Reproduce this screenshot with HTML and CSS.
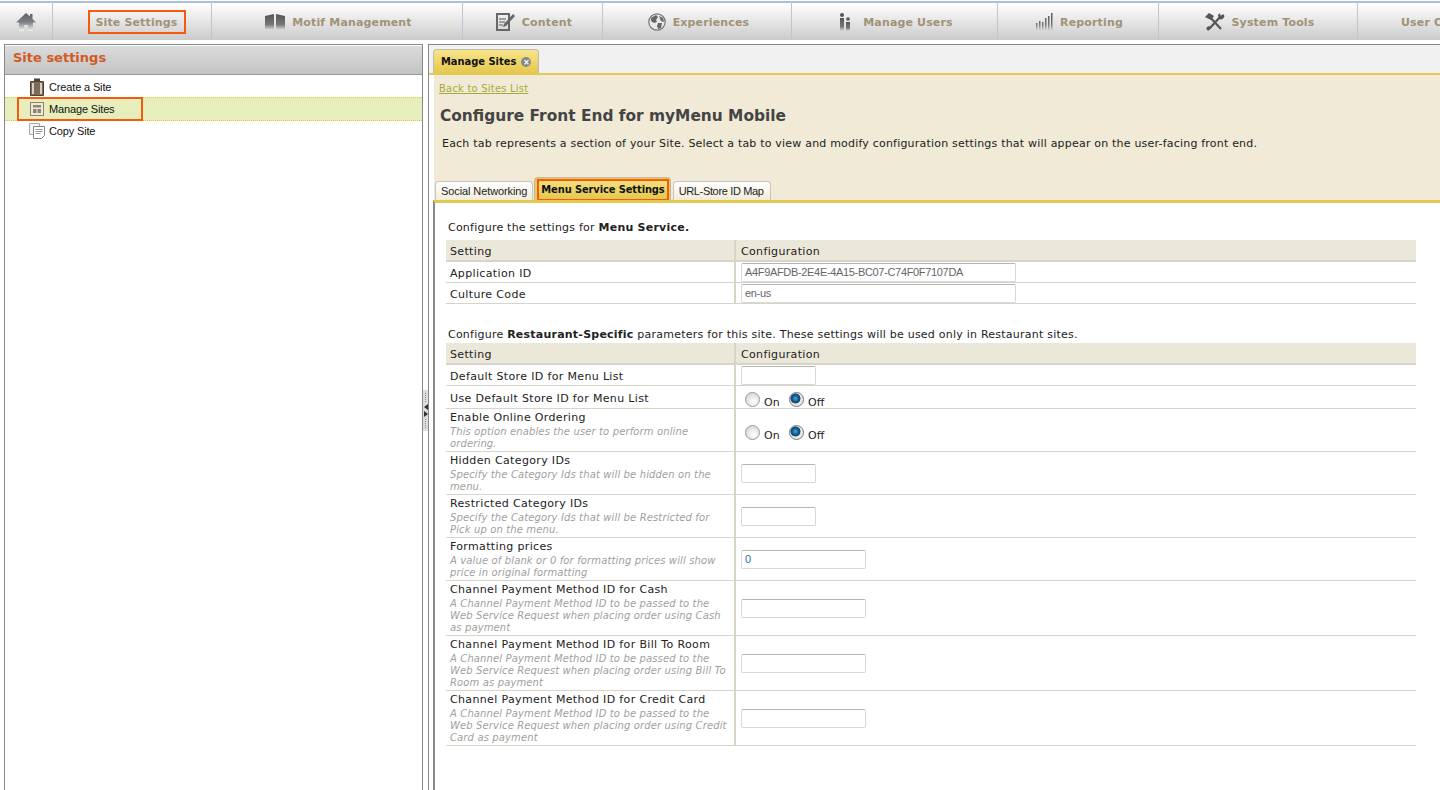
FILE: index.html
```html
<!DOCTYPE html>
<html lang="en">
<head>
    <meta charset="UTF-8">
    <meta name="viewport" content="width=device-width, initial-scale=1.0">
    <title>Configure Front End for myMenu Mobile</title>
    <link rel="stylesheet" href="styles.css">
</head>
<body>
    <svg class="defs" width="0" height="0">
        <defs>
            <linearGradient id="navGrad" x1="0" y1="0" x2="0" y2="1">
                <stop offset="0" stop-color="#555"/>
                <stop offset="0.65" stop-color="#777"/>
                <stop offset="1" stop-color="#ddd"/>
            </linearGradient>
            <linearGradient id="homeGrad" x1="0" y1="0" x2="0" y2="1">
                <stop offset="0" stop-color="#5c6066"/>
                <stop offset="0.5" stop-color="#7b7f80"/>
                <stop offset="1" stop-color="#f4f4f4"/>
            </linearGradient>
        </defs>
    </svg>

    <nav class="topnav">
        <a class="nav-item nav-home"><svg width="20" height="18" viewBox="0 0 20 18"><path fill="url(#homeGrad)" d="M10 0 L14 3.500 V1 H16.500 V6 L20 9.500 H17 V18 H12 V12 H8 V18 H3 V9.500 H0 Z"/></svg></a>
        <a class="nav-item nav-site"><span class="nav-current">Site Settings</span></a>
        <a class="nav-item"><svg width="20" height="16" viewBox="0 0 20 16"><path fill="url(#navGrad)" d="M0 2 L9 0 L9 16 L0 15 Z M11 0 L20 2 L20 15 L11 16 Z"/></svg>Motif Management</a>
        <a class="nav-item"><svg width="19" height="18" viewBox="0 0 19 18"><path fill="none" stroke="#666" stroke-width="2" d="M1 1 H13 V17 H1 Z"/><path fill="none" stroke="#888" stroke-width="1.400" d="M3 6 H10 M3 9 H9 M3 12 H7"/><path fill="#666" d="M17 1 L19 3 L10 13 L7 14 L8 11 Z"/></svg>Content</a>
        <a class="nav-item"><svg width="18" height="18" viewBox="0 0 18 18"><circle cx="9" cy="9" r="8.200" fill="#e8e8e8" stroke="#777" stroke-width="1.200"/><path fill="#666" d="M3 5 L8 2 L10 4 L8 7 L9 9 L6 10 L3 8 Z M10 10 L14 10 L13 15 L10 16 L9 13 Z M11 3 L15 5 L16 9 L13 8 Z"/></svg>Experiences</a>
        <a class="nav-item nav-users"><svg width="12" height="18" viewBox="0 0 12 18"><circle cx="3" cy="2" r="2" fill="#555"/><path fill="url(#navGrad)" d="M1 5 H5 V18 H1 Z"/><circle cx="9" cy="6" r="1.800" fill="#555"/><path fill="url(#navGrad)" d="M7 9 H11 V18 H7 Z"/></svg>Manage Users</a>
        <a class="nav-item"><svg width="17" height="18" viewBox="0 0 17 18"><path fill="url(#navGrad)" d="M0 10 H1.500 V18 H0 Z M3 8 H4.500 V18 H3 Z M6 9 H7.500 V18 H6 Z M9 5 H10.500 V18 H9 Z M12 3 H13.500 V18 H12 Z M15 0 H16.500 V18 H15 Z"/></svg>Reporting</a>
        <a class="nav-item"><svg width="20" height="19" viewBox="0 0 20 19"><path fill="none" stroke="#555" stroke-width="2.200" d="M3 2 L16 16 M16 3 L4 16"/><path fill="#555" d="M0 4 L4 0 L9 3 L6 7 Z M13 2 L15 0 L15.500 3 L18 1 L19.500 3 C19 6 16 7 14 6 Z M1 15 L4 13 L6 15 L3 18 Z"/></svg>System Tools</a>
        <a class="nav-item">User Options</a>
    </nav>

    <div class="workspace">
        <aside class="sidebar">
            <h2 class="side-title">Site settings</h2>
            <ul class="side-menu">
                <li class="side-row">
                    <a class="side-link"><svg width="16" height="18" viewBox="0 0 16 18"><path fill="#7a6a58" stroke="#4f4338" d="M1.500 3.500 H14.500 V17.500 H1.500 Z"/><path fill="#d8cfc2" d="M3 5 H5 V16 H3 Z M11 5 H13 V16 H11 Z"/><path fill="#4f4338" d="M5 0.500 H11 V4 H5 Z"/></svg>Create a Site</a>
                </li>
                <li class="side-row side-row-active">
                    <a class="side-link side-link-current"><svg width="14" height="14" viewBox="0 0 14 14"><rect x="0.500" y="0.500" width="13" height="13" fill="#f0ead6" stroke="#8d8370"/><path fill="#8d8370" d="M3 3 H11 V5.500 H3 Z M3 7 H6.500 V11 H3 Z M7.500 7 H11 V11 H7.500 Z"/></svg>Manage Sites</a>
                </li>
                <li class="side-row">
                    <a class="side-link"><svg width="16" height="16" viewBox="0 0 16 16"><path fill="#f4f4f4" stroke="#aaa" d="M0.500 0.500 H10.500 V11.500 H0.500 Z"/><path fill="#fff" stroke="#888" d="M4.500 3.500 H15.500 V12.500 L12.500 15.500 H4.500 Z"/><path fill="none" stroke="#999" d="M6.500 6.500 H13.500 M6.500 8.500 H13.500 M6.500 10.500 H11.500"/></svg>Copy Site</a>
                </li>
            </ul>
        </aside>

        <div class="splitter">
            <div class="split-handle">
                <span class="split-dots"></span>
                <span class="arrow-left"></span>
                <span class="arrow-right"></span>
                <span class="split-dots"></span>
            </div>
        </div>

        <main class="main-panel">
            <div class="doc-tabs">
                <div class="doc-tab">Manage Sites <span class="tab-close">&times;</span></div>
            </div>

            <section class="page-head">
                <a class="back-link">Back to Sites List</a>
                <h1>Configure Front End for myMenu Mobile</h1>
                <p class="page-intro">Each tab represents a section of your Site. Select a tab to view and modify configuration settings that will appear on the user-facing front end.</p>
                <div class="sub-tabs">
                    <a class="sub-tab">Social Networking</a>
                    <a class="sub-tab sub-tab-active"><span class="sub-tab-current">Menu Service Settings</span></a>
                    <a class="sub-tab sub-tab-url">URL-Store ID Map</a>
                </div>
            </section>

            <section class="tab-body">
                <p class="table-intro">Configure the settings for <b>Menu Service.</b></p>
                <table class="settings">
                    <tr><th class="col-name">Setting</th><th>Configuration</th></tr>
                    <tr class="row-plain">
                        <td class="col-name">Application ID</td>
                        <td><input class="field field-long" type="text" value="A4F9AFDB-2E4E-4A15-BC07-C74F0F7107DA"></td>
                    </tr>
                    <tr class="row-plain">
                        <td class="col-name">Culture Code</td>
                        <td><input class="field field-long" type="text" value="en-us"></td>
                    </tr>
                </table>

                <p class="table-intro table-intro-second">Configure <b>Restaurant-Specific</b> parameters for this site. These settings will be used only in Restaurant sites.</p>
                <table class="settings">
                    <tr><th class="col-name">Setting</th><th>Configuration</th></tr>
                    <tr class="row-plain">
                        <td class="col-name">Default Store ID for Menu List</td>
                        <td><input class="field field-short" type="text"></td>
                    </tr>
                    <tr class="row-plain row-radio">
                        <td class="col-name">Use Default Store ID for Menu List</td>
                        <td class="col-radio">
                            <div class="radio-group">
                                <label class="radio"><input type="radio" name="useDefault">On</label>
                                <label class="radio"><input type="radio" name="useDefault" checked>Off</label>
                            </div>
                        </td>
                    </tr>
                    <tr>
                        <td class="col-name">Enable Online Ordering<span class="hint">This option enables the user to perform online ordering.</span></td>
                        <td class="col-radio">
                            <div class="radio-group">
                                <label class="radio"><input type="radio" name="ordering">On</label>
                                <label class="radio"><input type="radio" name="ordering" checked>Off</label>
                            </div>
                        </td>
                    </tr>
                    <tr>
                        <td class="col-name">Hidden Category IDs<span class="hint">Specify the Category Ids that will be hidden on the menu.</span></td>
                        <td><input class="field field-short" type="text"></td>
                    </tr>
                    <tr>
                        <td class="col-name">Restricted Category IDs<span class="hint">Specify the Category Ids that will be Restricted for Pick up on the menu.</span></td>
                        <td><input class="field field-short" type="text"></td>
                    </tr>
                    <tr>
                        <td class="col-name">Formatting prices<span class="hint">A value of blank or 0 for formatting prices will show price in original formatting</span></td>
                        <td><input class="field field-mid field-blue" type="text" value="0"></td>
                    </tr>
                    <tr>
                        <td class="col-name">Channel Payment Method ID for Cash<span class="hint">A Channel Payment Method ID to be passed to the Web Service Request when placing order using Cash as payment</span></td>
                        <td><input class="field field-mid" type="text"></td>
                    </tr>
                    <tr>
                        <td class="col-name">Channel Payment Method ID for Bill To Room<span class="hint">A Channel Payment Method ID to be passed to the Web Service Request when placing order using Bill To Room as payment</span></td>
                        <td><input class="field field-mid" type="text"></td>
                    </tr>
                    <tr>
                        <td class="col-name">Channel Payment Method ID for Credit Card<span class="hint">A Channel Payment Method ID to be passed to the Web Service Request when placing order using Credit Card as payment</span></td>
                        <td><input class="field field-mid" type="text"></td>
                    </tr>
                </table>
            </section>
        </main>
    </div>
</body>
</html>
```

FILE: styles.css
```css
* {
    box-sizing: border-box;
}
html, body {
    height: 100%;
}
body {
    margin: 0;
    height: 100vh;
    overflow: hidden;
    display: flex;
    flex-direction: column;
    background-color: #fff;
    font-family: "DejaVu Sans", Verdana, sans-serif;
    font-size: 11px;
    color: #222;
}
.defs {
    position: absolute;
}

/* top nav */
.topnav {
    flex: none;
    height: 40px;
    display: grid;
    grid-template-columns: 53px 159px 251px 140px 189px 206px 161px 199px 1fr;
    margin-bottom: 4px;
    border-top: 1px solid #fff;
    background: linear-gradient(#fff 2px, #fafafa 6px, #cbcbcb);
    box-shadow: inset 0 2px 0 #a9c0dc;
    overflow: hidden;
}
.nav-item {
    display: flex;
    align-items: center;
    justify-content: center;
    gap: 7px;
    padding: 3px 0 0 3px;
    border-right: 1px solid #c3c3d3;
    font-weight: bold;
    font-size: 11px;
    letter-spacing: 0.15px;
    color: #a09276;
    white-space: nowrap;
}
.nav-item:last-child {
    border-right: none;
    justify-content: flex-start;
    padding-left: 43px;
}
.nav-home {
    padding-left: 0;
}
.nav-site {
    padding-left: 9px;
}
.nav-users svg {
    margin-right: 5px;
}
.nav-current {
    width: 98px;
    height: 24px;
    display: flex;
    align-items: center;
    justify-content: center;
    border: 2px solid #f65a0c;
}

/* workspace */
.workspace {
    flex: 1;
    min-height: 0;
    display: flex;
    padding-left: 4px;
}
.sidebar {
    flex: none;
    width: 419px;
    border: 1px solid #888;
    border-bottom: none;
    background-color: #fff;
    padding-top: 1px;
}
.side-title {
    margin: 0;
    height: 29px;
    padding: 4px 8px;
    border-bottom: 1px solid #999;
    background: linear-gradient(#dbdbdb, #c4c4c4);
    font-size: 13px;
    font-weight: bold;
    color: #d2591f;
}
.side-menu {
    list-style: none;
    margin: 0;
    padding: 0;
}
.side-row {
    height: 22px;
    display: flex;
    align-items: center;
    padding-left: 12px;
}
.side-row:first-child {
    padding-top: 1px;
}
.side-row:last-child {
    padding-bottom: 2px;
}
.side-row-active {
    height: 24px;
    background-color: #e8eebb;
    border-top: 1px dotted #e0c94e;
    border-bottom: 1px dotted #e0c94e;
}
.side-link {
    width: 126px;
    height: 100%;
    display: flex;
    align-items: center;
    font-family: "Liberation Sans", Arial, sans-serif;
    font-size: 11px;
    letter-spacing: -0.15px;
    color: #111;
}
.side-link svg {
    width: 16px;
    margin: 0 4px 0 12px;
}
.side-link-current {
    height: 24px;
    flex: none;
    border: 2px solid #f65a0c;
}
.side-link-current svg {
    margin: 0 4px 0 10px;
}

/* splitter */
.splitter {
    flex: none;
    width: 5px;
    padding-top: 346px;
    background-color: #fff;
}
.split-handle {
    width: 5px;
    height: 41px;
    display: flex;
    flex-direction: column;
    align-items: center;
    justify-content: space-between;
    padding: 3px 0;
    background-color: #ddd;
}
.split-dots {
    width: 1px;
    height: 9px;
    background: repeating-linear-gradient(#888 0 1px, transparent 1px 2px);
}
.arrow-left, .arrow-right {
    width: 0;
    height: 0;
    border-top: 3px solid transparent;
    border-bottom: 3px solid transparent;
}
.arrow-left {
    border-right: 4px solid #333;
}
.arrow-right {
    border-left: 4px solid #333;
}

/* right panel */
.main-panel {
    flex: 1;
    min-width: 0;
    border-top: 1px solid #888;
    border-left: 1px solid #888;
    background-color: #fff;
    display: flex;
    flex-direction: column;
}
.doc-tabs {
    flex: none;
    height: 30px;
    padding: 4px 0 0 4px;
    background-color: #f1f1f1;
    border-bottom: 2px solid #e5c84f;
    display: flex;
}
.doc-tab {
    flex: none;
    width: 106px;
    height: 24px;
    display: flex;
    align-items: center;
    gap: 5px;
    padding-left: 7px;
    border: 1px solid #bdbdb0;
    border-bottom: none;
    border-radius: 4px 4px 0 0;
    background: linear-gradient(#f8e48a, #e5c84f);
    font-family: "DejaVu Sans Condensed", "DejaVu Sans", Verdana, sans-serif;
    font-stretch: condensed;
    font-weight: bold;
    white-space: nowrap;
    color: #111;
}
.tab-close {
    width: 10px;
    height: 10px;
    border-radius: 50%;
    background-color: #888;
    color: #fff;
    font-size: 9px;
    line-height: 10px;
    text-align: center;
}
.page-head {
    flex: none;
    height: 125px;
    margin-left: 5px;
    padding: 7px 0 0 5px;
    background-color: #f0ead6;
    display: flex;
    flex-direction: column;
    align-items: flex-start;
}
.back-link {
    font-size: 10px;
    line-height: 13px;
    letter-spacing: 0.2px;
    color: #a9a938;
    text-decoration: underline;
}
.page-head h1 {
    margin: 10px 0 0 1px;
    font-size: 15.400px;
    line-height: 22px;
    color: #444;
}
.page-intro {
    margin: 10px 0 0 3px;
    line-height: 14px;
    letter-spacing: 0.2px;
    color: #222;
}
.sub-tabs {
    margin-top: auto;
    margin-left: -4px;
    display: flex;
    align-items: flex-end;
    gap: 2px;
}
.sub-tab {
    height: 19px;
    display: flex;
    align-items: center;
    padding: 0 5px;
    border: 1px solid #c5c5c5;
    border-bottom: none;
    border-radius: 4px 4px 0 0;
    background: linear-gradient(#fff, #f1ecd8);
    font-family: "Liberation Sans", Arial, sans-serif;
    font-size: 11px;
    letter-spacing: -0.1px;
    color: #222;
}
.sub-tab-url {
    padding-right: 6px;
    letter-spacing: -0.35px;
}
.sub-tab-active {
    height: 23px;
    margin-left: -1px;
    padding: 1px 1px 0 2px;
    background: #e9cd5a;
    border-color: #bdb8a0;
}
.sub-tab-current {
    height: 22px;
    display: flex;
    align-items: center;
    padding: 0 2px;
    border: 2px solid #f65a0c;
    background: linear-gradient(#f5dd7c, #e5c84f);
    font-family: "DejaVu Sans Condensed", "DejaVu Sans", Verdana, sans-serif;
    font-stretch: condensed;
    font-weight: bold;
    letter-spacing: -0.1px;
    color: #111;
}
.tab-body {
    flex: 1;
    margin-left: 4px;
    padding: 16px 0 0 11px;
    border-top: 3px solid #e5c84f;
    border-left: 2px solid #888;
    background-color: #fff;
}
.table-intro {
    margin: 0 0 5px 2px;
    height: 16px;
    line-height: 18px;
    letter-spacing: 0.23px;
}
.table-intro-second {
    margin-top: 22px;
    margin-bottom: 1px;
}
.settings {
    width: 970px;
    border-collapse: separate;
    border-spacing: 0;
    table-layout: fixed;
    line-height: 14px;
    letter-spacing: 0.35px;
}
.settings th, .settings td {
    padding: 0 0 0 5px;
    border-bottom: 1px solid #d8d4c8;
    font-weight: normal;
    text-align: left;
    vertical-align: middle;
}
.settings th {
    height: 22px;
    padding-top: 3px;
    background-color: #ebe7d9;
    border-bottom: 2px solid #d8d4c8;
}
.settings td {
    height: 21px;
}
.settings .col-name {
    width: 290px;
    padding: 2px 3px 1px 4px;
    border-right: 2px solid #d8d4c8;
    vertical-align: top;
}
.settings th.col-name, .settings .row-plain .col-name {
    padding-top: 3px;
    padding-bottom: 0;
    vertical-align: middle;
}
.settings .row-radio td {
    height: 23px;
}
.settings .col-radio {
    padding-top: 5px;
}
.hint {
    display: block;
    margin-top: 1px;
    font-size: 10px;
    line-height: 12px;
    letter-spacing: 0.13px;
    font-style: italic;
    color: #a0a0a0;
}
.field {
    display: block;
    height: 19px;
    padding: 0 3px;
    border: 1px solid #d8d8d8;
    border-top-color: #b5b5b5;
    border-radius: 2px;
    background-color: #fff;
    font-family: "Liberation Sans", Arial, sans-serif;
    font-size: 11px;
    letter-spacing: -0.33px;
    color: #666;
}
.field-long {
    width: 275px;
}
.field-mid {
    width: 125px;
}
.field-short {
    width: 75px;
}
.field-blue {
    color: #2d6a9f;
}
.radio-group {
    display: flex;
    padding-left: 4px;
}
.radio {
    flex: none;
    width: 44px;
    height: 15px;
    display: flex;
    align-items: flex-start;
    gap: 4px;
    font-size: 11px;
    line-height: 21px;
    letter-spacing: 0;
}
.radio input {
    appearance: none;
    flex: none;
    width: 15px;
    height: 15px;
    margin: 0;
    border: 1px solid #999;
    border-radius: 50%;
    background: radial-gradient(circle at 60% 65%, #fff, #ccc);
}
.radio input:checked {
    background: radial-gradient(circle at 42% 42%, #4aa6d8 0, #0d4f80 34%, #0d4f80 44%, #e8e8e8 50%);
    border-color: #777;
}
```
